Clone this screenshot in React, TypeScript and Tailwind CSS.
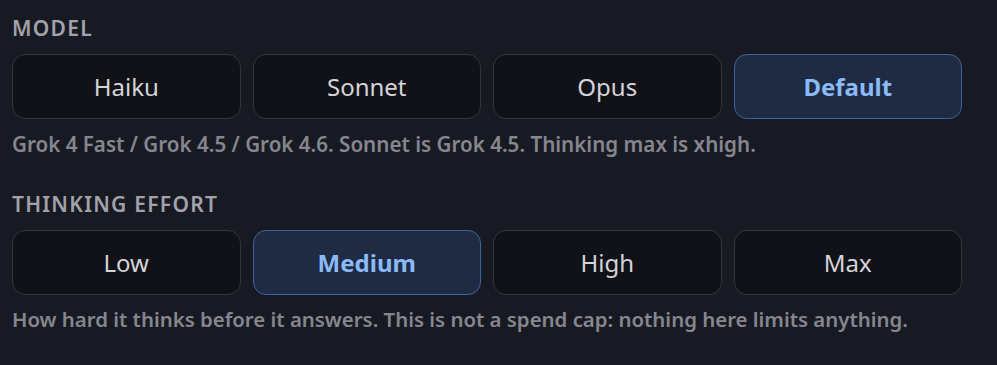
import React from 'react';

const models = ['Haiku', 'Sonnet', 'Opus', 'Default'];
const efforts = ['Low', 'Medium', 'High', 'Max'];

interface SegmentedProps {
  options: string[];
  value: string;
  onChange: (v: string) => void;
}

const Segmented: React.FC<SegmentedProps> = ({ options, value, onChange }) => (
  <div className="grid grid-cols-4 gap-3">
    {options.map((opt) => {
      const active = opt === value;
      return (
        <button
          key={opt}
          onClick={() => onChange(opt)}
          className={
            active
              ? 'h-[65px] rounded-[13px] border-[1.5px] border-[#3a659e] bg-[#1e2b43] text-[24px] font-bold text-[#8bbaf7]'
              : 'h-[65px] rounded-[13px] border-[1.5px] border-[#33343a] bg-[#111217] text-[24px] text-[#d4d4d8]'
          }
        >
          {opt}
        </button>
      );
    })}
  </div>
);

export default function App() {
  const [model, setModel] = React.useState('Default');
  const [effort, setEffort] = React.useState('Medium');

  return (
    <div className="min-h-screen bg-[#181a23] px-3 pt-[16px] font-['Noto_Sans',sans-serif]">
      <div className="w-[950px]">
        <div className="mb-[14px] text-[21px] leading-6 font-semibold uppercase tracking-[0.06em] text-[#a2a3aa]">
          Model
        </div>
        <Segmented options={models} value={model} onChange={setModel} />
        <p className="mt-[13px] text-[20.6px] leading-6 font-semibold text-[#86878e]">
          Grok 4 Fast / Grok 4.5 / Grok 4.6. Sonnet is Grok 4.5. Thinking max is xhigh.
        </p>

        <div className="mt-[36px] mb-[14px] text-[21px] leading-6 font-semibold uppercase tracking-[0.06em] text-[#a2a3aa]">
          Thinking effort
        </div>
        <Segmented options={efforts} value={effort} onChange={setEffort} />
        <p className="mt-[12px] text-[20.4px] leading-6 font-semibold text-[#86878e]">
          How hard it thinks before it answers. This is not a spend cap: nothing here limits anything.
        </p>
      </div>
    </div>
  );
}
